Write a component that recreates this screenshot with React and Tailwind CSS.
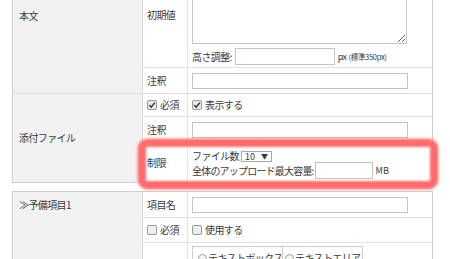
import React from "react";

function Check({ checked }) {
  return (
    <svg width="10" height="10" viewBox="0 0 10 10" className="shrink-0">
      <rect x="0.5" y="0.5" width="9" height="9" rx="1.5" fill={checked ? "#e8e8e8" : "#eeeeee"} stroke="#9a9a9a" />
      {checked && <path d="M2.3 5.2 L4.2 7.1 L7.8 2.6" fill="none" stroke="#333" strokeWidth="1.5" />}
    </svg>
  );
}

function Radio() {
  return (
    <svg width="9" height="9" viewBox="0 0 9 9" className="shrink-0">
      <circle cx="4.5" cy="4.5" r="4" fill="#f4f4f4" stroke="#a0a0a0" />
    </svg>
  );
}

function Input({ w, h = 16 }) {
  return <span className="block shrink-0 border border-[#c4c4c4] bg-white" style={{ width: w, height: h }} />;
}

export default function App() {
  return (
    <div className="relative w-[450px] h-[259px] overflow-hidden bg-white text-[#3a3a3a] text-[10px] leading-[14px] tracking-[-0.6px] whitespace-nowrap font-['Noto_Sans_CJK_JP','Noto_Sans',sans-serif]">
      {/* Table 1 */}
      <div className="ml-[12px] -mt-[12px] w-[421px] border border-[#cfcfcf]">
        {/* 本文 */}
        <div className="flex border-b border-[#dcdcdc]">
          <div className="w-[130px] shrink-0 bg-[#f2f2f2] border-r border-[#dcdcdc] pl-[6px] pt-[20px]">本文</div>
          <div className="flex-1 flex flex-col">
            <div className="flex h-[79px] border-b border-[#e2e2e2]">
              <div className="w-[45px] shrink-0 border-r border-[#e2e2e2] pl-[4px] pt-[19px]">初期値</div>
              <div className="flex-1 pl-[4px] pt-[5px]">
                <textarea className="block w-[215px] h-[50px] border border-[#c4c4c4] bg-white outline-none" readOnly />
                <div className="flex items-center mt-[4px] h-[17px]">
                  <span className="mr-[3px]">高さ調整:</span>
                  <Input w={100} h={17} />
                  <span className="ml-[3px] text-[9px]">px</span>
                  <span className="ml-[2px] text-[7.5px] tracking-[-0.3px]">(標準350px)</span>
                </div>
              </div>
            </div>
            <div className="flex h-[25px]">
              <div className="w-[45px] shrink-0 border-r border-[#e2e2e2] pl-[4px] flex items-center">注釈</div>
              <div className="flex-1 pl-[4px] flex items-center">
                <Input w={216} />
              </div>
            </div>
          </div>
        </div>
        {/* 添付ファイル */}
        <div className="flex">
          <div className="w-[130px] shrink-0 bg-[#f2f2f2] border-r border-[#dcdcdc] pl-[6px] flex items-center">添付ファイル</div>
          <div className="flex-1 flex flex-col">
            <div className="flex h-[23px] border-b border-[#e2e2e2]">
              <div className="w-[45px] shrink-0 border-r border-[#e2e2e2] pl-[4px] flex items-center gap-[3px]">
                <Check checked />
                <span>必須</span>
              </div>
              <div className="flex-1 pl-[4px] flex items-center gap-[3px]">
                <Check checked />
                <span>表示する</span>
              </div>
            </div>
            <div className="flex h-[26px] border-b border-[#e2e2e2]">
              <div className="w-[45px] shrink-0 border-r border-[#e2e2e2] pl-[4px] flex items-center">注釈</div>
              <div className="flex-1 pl-[4px] flex items-center">
                <Input w={216} />
              </div>
            </div>
            <div className="flex h-[39px]">
              <div className="w-[45px] shrink-0 border-r border-[#e2e2e2] pl-[4px] flex items-center">制限</div>
              <div className="flex-1 pl-[4px] pt-[7px] flex flex-col">
                <div className="flex items-center h-[12px]">
                  <span className="mr-[2px]">ファイル数</span>
                  <span className="flex items-center h-[11px] w-[31px] border border-[#a8a8a8] bg-white pl-[3px] text-[9px] leading-[9px] tracking-normal">
                    10<span className="ml-[6px] text-[7px]">▼</span>
                  </span>
                </div>
                <div className="flex items-center h-[17px]">
                  <span className="mr-[1px] tracking-[-0.8px]">全体のアップロード最大容量:</span>
                  <Input w={58} h={17} />
                  <span className="ml-[3px] text-[9px] tracking-normal">MB</span>
                </div>
              </div>
            </div>
          </div>
        </div>
      </div>

      {/* Table 2 */}
      <div className="ml-[12px] mt-[8px] w-[421px] border border-[#cfcfcf]">
        <div className="flex">
          <div className="w-[130px] shrink-0 bg-[#f2f2f2] border-r border-[#dcdcdc] pl-[6px] pt-[6px]">≫予備項目1</div>
          <div className="flex-1 flex flex-col">
            <div className="flex h-[26px] border-b border-[#e2e2e2]">
              <div className="w-[45px] shrink-0 border-r border-[#e2e2e2] pl-[4px] flex items-center">項目名</div>
              <div className="flex-1 pl-[4px] flex items-center">
                <Input w={216} />
              </div>
            </div>
            <div className="flex h-[25px] border-b border-[#e2e2e2]">
              <div className="w-[45px] shrink-0 border-r border-[#e2e2e2] pl-[4px] flex items-center gap-[3px]">
                <Check />
                <span>必須</span>
              </div>
              <div className="flex-1 pl-[4px] flex items-center gap-[3px]">
                <Check />
                <span>使用する</span>
              </div>
            </div>
            <div className="flex h-[40px]">
              <div className="w-[45px] shrink-0 border-r border-[#e2e2e2]" />
              <div className="flex-1 pl-[4px] pt-[3px]">
                <div className="flex w-[171px] h-[30px] border border-[#cccccc]">
                  <div className="w-[90px] border-r border-[#cccccc] pl-[5px] pt-[4px] flex items-start gap-[1px]">
                    <span className="mt-[3px]"><Radio /></span>
                    <span>テキストボックス</span>
                  </div>
                  <div className="flex-1 pl-[2px] pt-[4px] flex items-start gap-[1px]">
                    <span className="mt-[3px]"><Radio /></span>
                    <span>テキストエリア</span>
                  </div>
                </div>
              </div>
            </div>
          </div>
        </div>
      </div>

      {/* Red highlight overlay */}
      <div className="absolute left-[138px] top-[139px] w-[300px] h-[50px] rounded-[9px] border-[8px] border-[#ff6b6b] blur-[1px] shadow-[0_0_3px_rgba(255,90,90,0.6)]" />
    </div>
  );
}
